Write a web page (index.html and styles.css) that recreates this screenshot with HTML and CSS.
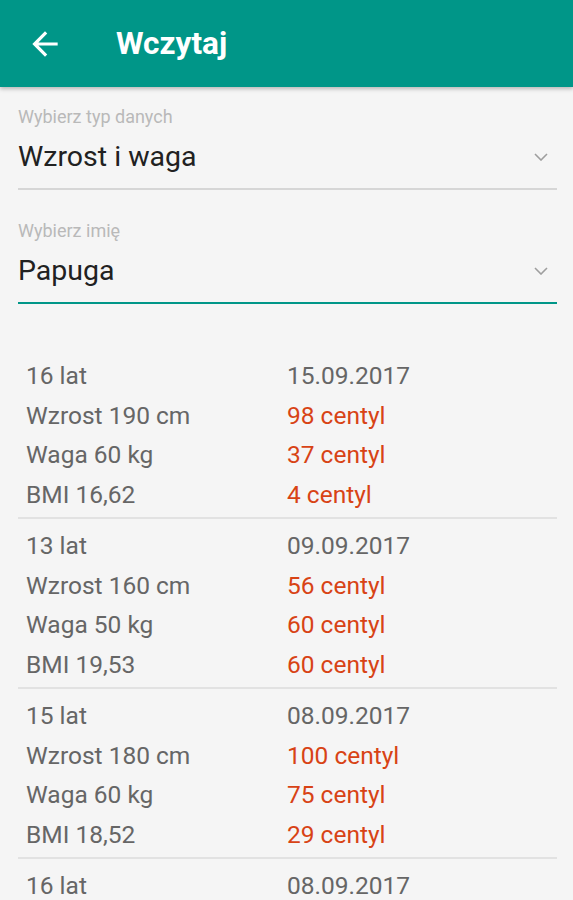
FILE: index.html
```html
<!DOCTYPE html>
<html lang="pl">
<head>
<meta charset="utf-8">
<title>Wczytaj</title>
<link rel="stylesheet" href="styles.css">
</head>
<body>
<header class="appbar">
  <svg class="back" viewBox="0 0 24 24" width="38" height="38"><path fill="#fff" d="M20 11H7.83l5.59-5.59L12 4l-8 8 8 8 1.41-1.41L7.83 13H20v-2z"/></svg>
  <h1 class="title">Wczytaj</h1>
</header>
<main class="content">
  <div class="field">
    <div class="label">Wybierz typ danych</div>
    <div class="select">
      <span class="value">Wzrost i waga</span>
      <svg class="chev" viewBox="0 0 14 8" width="14" height="8"><polyline points="1,1 7,7 13,1" fill="none" stroke="#9e9e9e" stroke-width="1.6"/></svg>
    </div>
  </div>
  <div class="field">
    <div class="label">Wybierz imię</div>
    <div class="select focused">
      <span class="value">Papuga</span>
      <svg class="chev" viewBox="0 0 14 8" width="14" height="8"><polyline points="1,1 7,7 13,1" fill="none" stroke="#9e9e9e" stroke-width="1.6"/></svg>
    </div>
  </div>
  <ul class="list">
    <li class="entry">
      <span>16 lat</span><span>15.09.2017</span>
      <span>Wzrost 190 cm</span><span class="pct">98 centyl</span>
      <span>Waga 60 kg</span><span class="pct">37 centyl</span>
      <span>BMI 16,62</span><span class="pct">4 centyl</span>
    </li>
    <li class="entry">
      <span>13 lat</span><span>09.09.2017</span>
      <span>Wzrost 160 cm</span><span class="pct">56 centyl</span>
      <span>Waga 50 kg</span><span class="pct">60 centyl</span>
      <span>BMI 19,53</span><span class="pct">60 centyl</span>
    </li>
    <li class="entry">
      <span>15 lat</span><span>08.09.2017</span>
      <span>Wzrost 180 cm</span><span class="pct">100 centyl</span>
      <span>Waga 60 kg</span><span class="pct">75 centyl</span>
      <span>BMI 18,52</span><span class="pct">29 centyl</span>
    </li>
    <li class="entry">
      <span>16 lat</span><span>08.09.2017</span>
    </li>
  </ul>
</main>
</body>
</html>
```
FILE: styles.css
```css
* { box-sizing: border-box; }
html, body { margin: 0; padding: 0; }
body {
  background: #f5f5f5;
  font-family: Roboto, "Liberation Sans", sans-serif;
  width: 573px;
  height: 900px;
  overflow: hidden;
}
.appbar {
  height: 87px;
  background: #009688;
  display: flex;
  align-items: center;
  padding-left: 26px;
  box-shadow: 0 2px 4px rgba(0,0,0,0.25);
  position: relative;
  z-index: 1;
}
.back { display: block; flex: none; }
.title {
  margin: 0 0 0 52px;
  color: #fff;
  font-size: 31.5px;
  font-weight: 700;
  line-height: 40px;
}
.content {
  padding: 18px 16px 0 18px;
  display: flex;
  flex-direction: column;
  gap: 29px;
}
.label {
  font-size: 18px;
  line-height: 24px;
  color: #b9b9b9;
}
.select {
  margin-top: 8px;
  display: flex;
  align-items: center;
  justify-content: space-between;
  border-bottom: 2px solid #d6d6d6;
  padding-bottom: 11px;
}
.select.focused { border-bottom-color: #009688; }
.value {
  font-size: 28.5px;
  line-height: 40px;
  color: #212121;
}
.chev { margin-right: 9px; }
.list {
  list-style: none;
  margin: 16px 0 0;
  padding: 0;
}
.entry {
  display: grid;
  grid-template-columns: 261px 1fr;
  padding: 7px 0 3px 8px;
  border-bottom: 2px solid #e2e2e2;
  font-size: 24.5px;
  line-height: 39.5px;
  color: #666;
}
.entry:last-child { border-bottom: none; }
.pct { color: #d84315; }
```
